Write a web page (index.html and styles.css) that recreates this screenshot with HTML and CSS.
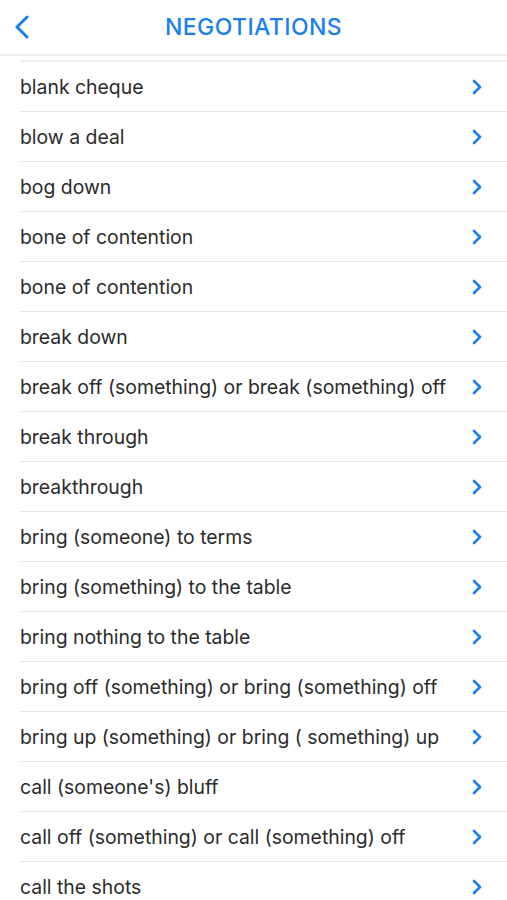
FILE: index.html
```html
<!DOCTYPE html>
<html lang="en">
<head>
  <meta charset="UTF-8" />
  <meta name="viewport" content="width=device-width, initial-scale=1.0" />
  <title>Negotiations</title>
  <link rel="stylesheet" href="styles.css">
</head>
<body>
  <header class="nav">
    <button class="back-btn" aria-label="Back">
      <svg width="16" height="24" viewBox="0 0 16 24"><path d="M13 2 L3 12 L13 22" fill="none" stroke="#1c7fee" stroke-width="3" stroke-linecap="round" stroke-linejoin="round"/></svg>
    </button>
    <h1 class="title">NEGOTIATIONS</h1>
  </header>

  <ul class="list" id="list"></ul>

  <script>
    const items = [
      "blank cheque",
      "blow a deal",
      "bog down",
      "bone of contention",
      "bone of contention",
      "break down",
      "break off (something) or break (something) off",
      "break through",
      "breakthrough",
      "bring (someone) to terms",
      "bring (something) to the table",
      "bring nothing to the table",
      "bring off (something) or bring (something) off",
      "bring up (something) or bring ( something) up",
      "call (someone's) bluff",
      "call off (something) or call (something) off",
      "call the shots"
    ];

    const list = document.getElementById("list");
    const chevron = '<svg width="10" height="16" viewBox="0 0 10 16"><path d="M2 2 L8 8 L2 14" fill="none" stroke="#1c7fee" stroke-width="2.6" stroke-linecap="round" stroke-linejoin="round"/></svg>';

    items.forEach(text => {
      let li = document.createElement("li");
      li.className = "row";
      li.innerHTML = `<span class="label"></span><span class="chev">${chevron}</span>`;
      li.querySelector(".label").textContent = text;
      list.appendChild(li);
    });
  </script>
</body>
</html>
```

FILE: styles.css
```css
body {
  font-family: 'Inter', 'Noto Sans', sans-serif;
  margin: 0;
  padding: 0;
  background: white;
  color: #2b2b2b;
  overflow: hidden;
}
.nav {
  height: 54px;
  display: flex;
  align-items: center;
  justify-content: center;
  position: relative;
  border-bottom: 2px solid #ececec;
}
.back-btn {
  position: absolute;
  left: 14px;
  top: 15px;
  background: none;
  border: none;
  padding: 0;
  cursor: pointer;
}
.title {
  margin: 0;
  font-size: 23px;
  font-weight: 500;
  color: #1c7fee;
  letter-spacing: 0.4px;
}
.list {
  list-style: none;
  margin: 0;
  padding: 0 0 0 20px;
}
.row {
  height: 49px;
  display: flex;
  align-items: center;
  justify-content: space-between;
  border-top: 1px solid #e8e8e8;
  padding-right: 25px;
  font-size: 19.4px;
  font-weight: 400;
}
.row:first-child {
  margin-top: 4px;
  border-top: 2px solid #ececec;
}
.label {
  white-space: nowrap;
}
.chev {
  display: flex;
}
```
